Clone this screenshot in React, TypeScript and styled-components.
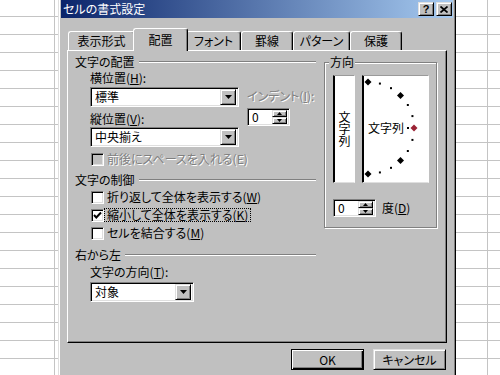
import React from "react";
import styled, { createGlobalStyle, css } from "styled-components";

const face = "#c0c0c0";
const shadow = "#808080";
const light = "#dfdfdf";
const gridLine = "#c4c4c4";

const GlobalStyle = createGlobalStyle`
  html, body {
    margin: 0;
    padding: 0;
    background: #fff;
  }
  body {
    font-family: "Noto Sans CJK JP", "Noto Sans", sans-serif;
    font-size: 12px;
    line-height: 14px;
    color: #000;
    font-feature-settings: "palt";
  }
  u {
    text-decoration-thickness: 1px;
    text-underline-offset: 1px;
  }
`;

const raised = css`
  border: 1px solid;
  border-color: ${light} #000 #000 ${light};
  box-shadow: inset 1px 1px #fff, inset -1px -1px ${shadow};
`;

const sunken = css`
  border: 1px solid;
  border-color: ${shadow} #fff #fff ${shadow};
  box-shadow: inset 1px 1px #000, inset -1px -1px ${light};
`;

const Desktop = styled.div`
  box-sizing: border-box;
  width: 500px;
  height: 375px;
  overflow: hidden;
  display: flex;
  align-items: flex-start;
  padding-left: 58px;
  background-color: #fff;
  background-image: linear-gradient(
      to right,
      transparent 54px,
      ${gridLine} 54px,
      ${gridLine} 55px,
      transparent 55px,
      transparent 487px,
      ${gridLine} 487px,
      ${gridLine} 488px,
      transparent 488px
    ),
    repeating-linear-gradient(
      to bottom,
      transparent 0 16px,
      ${gridLine} 16px 17px,
      transparent 17px 18px
    );
`;

const Dialog = styled.div`
  box-sizing: border-box;
  flex: none;
  width: 398px;
  height: 392px;
  margin-top: -3px;
  padding: 2px;
  background: ${face};
  ${raised}
  display: flex;
  flex-direction: column;
`;

const TitleBar = styled.div`
  height: 18px;
  display: flex;
  align-items: center;
  padding: 0 1px 0 2px;
  background: linear-gradient(to right, #0a246a, #a6caf0);
  color: #fff;
`;

const Title = styled.span`
  flex: 1;
`;

const CaptionButton = styled.div<{ $gap?: number }>`
  box-sizing: border-box;
  width: 16px;
  height: 14px;
  margin-left: ${(p) => p.$gap ?? 0}px;
  background: ${face};
  ${raised}
  display: flex;
  align-items: center;
  justify-content: center;
  color: #000;
  font: bold 11px/1 "Liberation Sans", sans-serif;
`;

const Body = styled.div`
  padding: 10px 6px 0 6px;
  display: flex;
  flex-direction: column;
`;

const TabRow = styled.div`
  height: 22px;
  display: flex;
  align-items: flex-end;
  padding-left: 1px;
`;

const Tab = styled.div<{ $w: number; $active?: boolean }>`
  box-sizing: border-box;
  flex: none;
  width: ${(p) => p.$w}px;
  height: 19px;
  background: ${face};
  border: 1px solid;
  border-color: #fff #000 transparent #fff;
  border-bottom: none;
  border-radius: 3px 3px 0 0;
  box-shadow: inset -1px 0 ${shadow};
  display: flex;
  align-items: center;
  justify-content: center;
  ${(p) =>
    p.$active &&
    css`
      width: ${p.$w + 4}px;
      height: 23px;
      margin: 0 -2px -1px;
      position: relative;
      z-index: 2;
    `}
`;

const Panel = styled.div`
  position: relative;
  box-sizing: border-box;
  width: 380px;
  height: 293px;
  border: 1px solid;
  border-color: #fff #000 #000 #fff;
  box-shadow: inset -1px -1px ${shadow};
  padding: 4px 0 0 7px;
  display: flex;
  align-items: flex-start;
  gap: 8px;
`;

const LeftCol = styled.div`
  width: 241px;
  display: flex;
  flex-direction: column;
`;

const SectionHead = styled.div<{ $mt?: number }>`
  height: 14px;
  margin-top: ${(p) => p.$mt ?? 0}px;
  display: flex;
  align-items: center;
  white-space: nowrap;
  &::after {
    content: "";
    flex: 1;
    margin-left: 4px;
    height: 0;
    border-top: 1px solid ${shadow};
    border-bottom: 1px solid #fff;
  }
`;

const SectionBody = styled.div`
  padding-left: 15px;
  display: flex;
  flex-direction: column;
`;

const AlignBlock = styled.div`
  display: flex;
  gap: 8px;
`;

const Stack = styled.div`
  width: 149px;
  display: flex;
  flex-direction: column;
`;

const IndentCol = styled.div`
  padding-top: 20px;
  display: flex;
  flex-direction: column;
`;

const disabledText = css`
  color: ${shadow};
  text-shadow: 1px 1px 0 #fff;
`;

const FieldLabel = styled.div<{ $mt?: number; $disabled?: boolean }>`
  height: 14px;
  margin-top: ${(p) => p.$mt ?? 0}px;
  white-space: nowrap;
  ${(p) => p.$disabled && disabledText}
`;

const ComboBox = styled.div<{ $w: number; $mt?: number }>`
  box-sizing: border-box;
  width: ${(p) => p.$w}px;
  height: 20px;
  margin-top: ${(p) => p.$mt ?? 0}px;
  padding: 2px;
  background: #fff;
  ${sunken}
  display: flex;
  align-items: center;
`;

const ComboText = styled.span`
  flex: 1;
  padding-left: 2px;
`;

const DropButton = styled.div`
  box-sizing: border-box;
  width: 16px;
  height: 16px;
  background: ${face};
  ${raised}
  display: flex;
  align-items: center;
  justify-content: center;
`;

const SpinField = styled.div<{ $mt?: number }>`
  box-sizing: border-box;
  width: 43px;
  height: 18px;
  margin-top: ${(p) => p.$mt ?? 0}px;
  padding: 2px;
  background: #fff;
  ${sunken}
  display: flex;
  align-items: center;
`;

const SpinValue = styled.span`
  flex: 1;
  padding-left: 2px;
`;

const SpinButtons = styled.div`
  width: 15px;
  height: 14px;
  display: flex;
  flex-direction: column;
`;

const SpinButton = styled.div`
  flex: 1;
  box-sizing: border-box;
  background: ${face};
  ${raised}
  display: flex;
  align-items: center;
  justify-content: center;
`;

const CheckRow = styled.div<{ $mt?: number; $disabled?: boolean }>`
  height: 14px;
  margin-top: ${(p) => p.$mt ?? 0}px;
  padding-left: 1px;
  display: flex;
  align-items: center;
  white-space: nowrap;
  ${(p) => p.$disabled && disabledText}
`;

const CheckBox = styled.div<{ $disabled?: boolean }>`
  box-sizing: border-box;
  flex: none;
  width: 13px;
  height: 13px;
  background: ${(p) => (p.$disabled ? face : "#fff")};
  ${sunken}
  display: flex;
  align-items: center;
  justify-content: center;
`;

const CheckLabel = styled.span<{ $focus?: boolean }>`
  padding: 0 2px;
  line-height: 12px;
  border: 1px dotted ${(p) => (p.$focus ? "#000" : "transparent")};
`;

const GroupBox = styled.div`
  position: relative;
  box-sizing: border-box;
  width: 113px;
  height: 166px;
  margin-top: 7px;
  padding: 12px 0 0 8px;
  border: 1px solid ${shadow};
  box-shadow: inset 1px 1px #fff, 1px 1px #fff;
`;

const Legend = styled.span`
  position: absolute;
  top: -8px;
  left: 4px;
  padding: 0 1px;
  background: ${face};
`;

const Previews = styled.div`
  display: flex;
  gap: 7px;
`;

const previewBox = css`
  box-sizing: border-box;
  height: 108px;
  background: #fff;
  border: 1px solid;
  border-color: #9a9a9a #fff ${light} #000;
  box-shadow: inset 1px 0 #000;
`;

const VerticalPreview = styled.div`
  ${previewBox}
  width: 22px;
  display: flex;
  align-items: center;
  justify-content: center;
  span {
    writing-mode: vertical-rl;
    text-orientation: upright;
    line-height: 14px;
    font-feature-settings: normal;
  }
`;

const Dial = styled.div`
  ${previewBox}
  position: relative;
  width: 67px;
`;

const DialSvg = styled.svg`
  position: absolute;
  left: 0;
  top: 0;
`;

const DialText = styled.span`
  position: absolute;
  left: 5px;
  top: 45px;
  line-height: 14px;
`;

const DegreeRow = styled.div`
  margin-top: 16px;
  display: flex;
  align-items: center;
  gap: 6px;
`;

const ButtonRow = styled.div`
  margin-top: 6px;
  padding-right: 1px;
  display: flex;
  justify-content: flex-end;
  gap: 9px;
`;

const PushButton = styled.div<{ $default?: boolean }>`
  box-sizing: border-box;
  width: 73px;
  height: 21px;
  background: ${face};
  ${raised}
  display: flex;
  align-items: center;
  justify-content: center;
  ${(p) =>
    p.$default &&
    css`
      border-color: #000;
      box-shadow: inset 1px 1px #fff, inset -1px -1px #000,
        inset -2px -2px ${shadow};
    `}
`;

const DownArrow = () => (
  <svg width="7" height="4" viewBox="0 0 7 4">
    <path d="M0 0H7L3.5 4Z" fill="#000" />
  </svg>
);

const SmallArrow = ({ up }: { up?: boolean }) => (
  <svg width="5" height="3" viewBox="0 0 5 3">
    <path d={up ? "M0 3H5L2.5 0Z" : "M0 0H5L2.5 3Z"} fill="#000" />
  </svg>
);

const CloseGlyph = () => (
  <svg width="8" height="7" viewBox="0 0 8 7">
    <path d="M0.5 0.5L7.5 6.5M7.5 0.5L0.5 6.5" stroke="#000" strokeWidth="1.7" />
  </svg>
);

const CheckMark = () => (
  <svg width="9" height="9" viewBox="0 0 9 9">
    <polyline points="1,4 3.3,6.5 8,1.5" fill="none" stroke="#000" strokeWidth="2" />
  </svg>
);

const Combo: React.FC<{ w: number; mt?: number; value: string }> = ({ w, mt, value }) => (
  <ComboBox $w={w} $mt={mt}>
    <ComboText>{value}</ComboText>
    <DropButton>
      <DownArrow />
    </DropButton>
  </ComboBox>
);

const Spinner: React.FC<{ mt?: number; value: string }> = ({ mt, value }) => (
  <SpinField $mt={mt}>
    <SpinValue>{value}</SpinValue>
    <SpinButtons>
      <SpinButton>
        <SmallArrow up />
      </SpinButton>
      <SpinButton>
        <SmallArrow />
      </SpinButton>
    </SpinButtons>
  </SpinField>
);

const Check: React.FC<{
  mt?: number;
  checked?: boolean;
  disabled?: boolean;
  focus?: boolean;
  children: React.ReactNode;
}> = ({ mt, checked, disabled, focus, children }) => (
  <CheckRow $mt={mt} $disabled={disabled}>
    <CheckBox $disabled={disabled}>{checked && <CheckMark />}</CheckBox>
    <CheckLabel $focus={focus}>{children}</CheckLabel>
  </CheckRow>
);

const OrientationDial = () => {
  const cx = 5;
  const cy = 52;
  const r = 46;
  const marks: React.ReactNode[] = [];
  for (let a = 90; a >= -90; a -= 15) {
    const rad = (a * Math.PI) / 180;
    const x = cx + r * Math.cos(rad);
    const y = cy - r * Math.sin(rad);
    if (a % 45 === 0) {
      marks.push(
        <path
          key={a}
          d={`M${x} ${y - 3.5}L${x + 3.5} ${y}L${x} ${y + 3.5}L${x - 3.5} ${y}Z`}
          fill={a === 0 ? "#9b2335" : "#000"}
        />
      );
    } else {
      marks.push(<rect key={a} x={x - 1} y={y - 1} width={2} height={2} fill="#000" />);
    }
  }
  return (
    <Dial>
      <DialSvg width="65" height="106" viewBox="0 0 65 106">
        {marks}
        <rect x={44} y={51} width={2} height={2} fill="#000" />
      </DialSvg>
      <DialText>文字列</DialText>
    </Dial>
  );
};

const tabs = [
  { label: "表示形式", w: 67 },
  { label: "配置", w: 51, active: true },
  { label: "フォント", w: 55 },
  { label: "罫線", w: 52 },
  { label: "パターン", w: 57 },
  { label: "保護", w: 52 },
];

export default function App() {
  return (
    <>
      <GlobalStyle />
      <Desktop>
        <Dialog>
          <TitleBar>
            <Title>セルの書式設定</Title>
            <CaptionButton>?</CaptionButton>
            <CaptionButton $gap={2}>
              <CloseGlyph />
            </CaptionButton>
          </TitleBar>
          <Body>
            <TabRow>
              {tabs.map((t) => (
                <Tab key={t.label} $w={t.w} $active={t.active}>
                  {t.label}
                </Tab>
              ))}
            </TabRow>
            <Panel>
              <LeftCol>
                <SectionHead>文字の配置</SectionHead>
                <SectionBody>
                  <AlignBlock>
                    <Stack>
                      <FieldLabel $mt={2}>
                        横位置(<u>H</u>):
                      </FieldLabel>
                      <Combo w={149} mt={2} value="標準" />
                      <FieldLabel $mt={5}>
                        縦位置(<u>V</u>):
                      </FieldLabel>
                      <Combo w={149} mt={1} value="中央揃え" />
                    </Stack>
                    <IndentCol>
                      <FieldLabel $disabled>
                        インデント(<u>I</u>):
                      </FieldLabel>
                      <Spinner mt={5} value="0" />
                    </IndentCol>
                  </AlignBlock>
                  <Check mt={5} disabled>
                    前後にスペースを入れる(E)
                  </Check>
                </SectionBody>
                <SectionHead $mt={7}>文字の制御</SectionHead>
                <SectionBody>
                  <Check mt={3}>
                    折り返して全体を表示する(<u>W</u>)
                  </Check>
                  <Check mt={4} checked focus>
                    縮小して全体を表示する(<u>K</u>)
                  </Check>
                  <Check mt={4}>
                    セルを結合する(<u>M</u>)
                  </Check>
                </SectionBody>
                <SectionHead $mt={8}>右から左</SectionHead>
                <SectionBody>
                  <FieldLabel $mt={3}>
                    文字の方向(<u>T</u>):
                  </FieldLabel>
                  <Combo w={104} mt={3} value="対象" />
                </SectionBody>
              </LeftCol>
              <GroupBox>
                <Legend>方向</Legend>
                <Previews>
                  <VerticalPreview>
                    <span>文字列</span>
                  </VerticalPreview>
                  <OrientationDial />
                </Previews>
                <DegreeRow>
                  <Spinner value="0" />
                  <span>
                    度(<u>D</u>)
                  </span>
                </DegreeRow>
              </GroupBox>
            </Panel>
            <ButtonRow>
              <PushButton $default>OK</PushButton>
              <PushButton>キャンセル</PushButton>
            </ButtonRow>
          </Body>
        </Dialog>
      </Desktop>
    </>
  );
}
